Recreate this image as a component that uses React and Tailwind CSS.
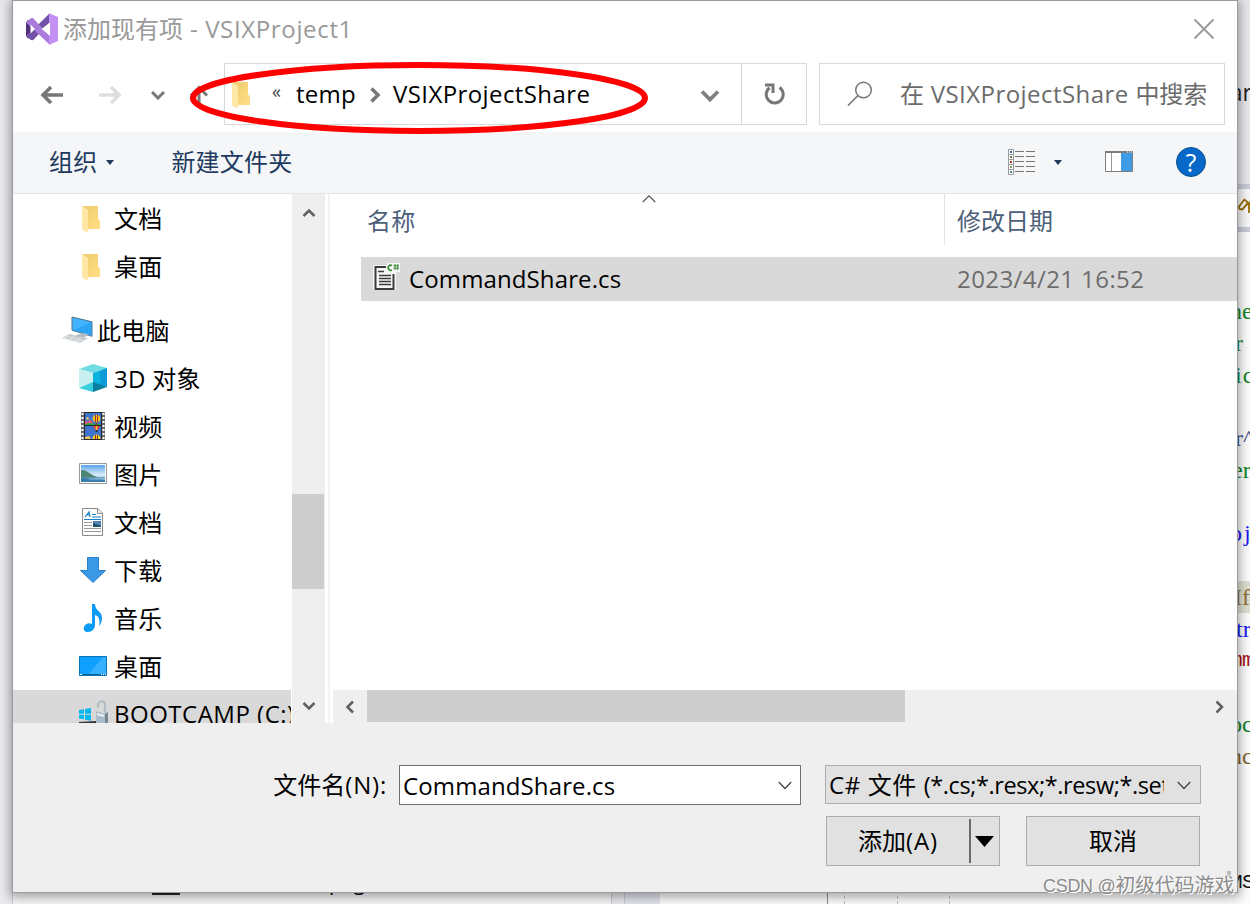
import React from "react";

const svg = { fill: "none", xmlns: "http://www.w3.org/2000/svg" };

const FolderIcon = () => (
  <svg {...svg} width="28" height="28" viewBox="0 -1 28 28" className="shrink-0">
    <defs>
      <linearGradient id="fold" x1="0" y1="0" x2="1" y2="1">
        <stop offset="0" stopColor="#efcb6c" />
        <stop offset="1" stopColor="#ffde86" />
      </linearGradient>
    </defs>
    <path d="M4 1h15v12.500l2 2V24H8z" fill="url(#fold)" />
    <path d="M3 1l6 4v21.500l-1 1-5-3z" fill="#ffe8a6" />
  </svg>
);

const VsIcon = () => (
  <svg {...svg} width="32" height="32" viewBox="0 0 32 32">
    <path d="M0 9.500L1.500 7.500 5 6v20l-3.500-1L0 22.500z" fill="#52307c" />
    <path d="M0 22.500l6-4.800L24 0v9L7 27.300 5 27z" fill="#7451a8" />
    <path d="M0 9.500L5.500 5 7 5l17 18.500V32L5 14z" fill="#a87bdc" />
    <path d="M23 0.300L32 4v24l-9 4z" fill="#c490f4" />
    <path d="M4.500 11.500v9L9 16z" fill="#fff" />
    <path d="M24 9.500v13L15.500 16z" fill="#fff" />
  </svg>
);

const PcIcon = () => (
  <svg {...svg} width="31" height="28" viewBox="0 0 31 28">
    <path d="M10 1l20 4.800v14.500L10 14.200z" fill="#42b4ff" stroke="#4a7590" />
    <path d="M12 14l17-8v13z" fill="#2ba4f8" />
    <path d="M14 19l8-2 5 2-7 3z" fill="#b4bcc2" />
    <path d="M0 22l7-4 19 4-8 5z" fill="#c2c7cb" />
    <path d="M4 20l17 4.500M2 22l17 4M7 18l-5 5M13 19l-6 5M19 21l-6 5" stroke="#eef0f1" strokeWidth=".8" />
  </svg>
);

const CubeIcon = () => (
  <svg {...svg} width="28" height="28" viewBox="0 0 28 28">
    <path d="M14 0l14 4-14 5L0 5z" fill="#73dce2" />
    <path d="M0 5l14 4v10L0 24z" fill="#c8f0f0" />
    <path d="M14 9l14-5v19l-14-4z" fill="#08b4dc" />
    <path d="M21 7l7-3v19l-7-2z" fill="#0a9bd8" />
    <path d="M0 24l14-6v10z" fill="#38cede" />
    <path d="M14 18l14 5-14 5z" fill="#087f9e" />
  </svg>
);

const VideoIcon = () => (
  <svg {...svg} width="28" height="28" viewBox="0 0 28 28">
    <path d="M2 0h24v28H2z" fill="#686868" />
    <path d="M3.500 1v27M24.500 1v27" stroke="#fff" strokeWidth="2" strokeDasharray="2 2" />
    <path d="M5.500 .5h17v13h-17zM5.500 13.500h17v14h-17z" fill="#3e74cf" stroke="#282828" />
    <path d="M6 9l3 1 2-3 3 4v2H6z" fill="#ed597a" />
    <path d="M7 6l2-1 1 2-2 1z" fill="#f4d34d" />
    <path d="M6 12l5-1 5 1h6v1H6z" fill="#28a443" />
    <circle cx="17.500" cy="6.500" r="3.800" fill="#f6c91b" />
    <path d="M16.500 3v7M18.500 3v7" stroke="#a22728" />
    <path d="M16.500 11h2v2h-2z" fill="#7c4a1d" />
    <path d="M14 14h7l-2.500 4h-2z" fill="#e53a35" />
    <path d="M17.500 14v4" stroke="#f8d22a" strokeWidth="1.500" />
    <path d="M16.700 18h1.600v2h-1.600z" fill="#222" />
    <path d="M6 25l4-1 2 3H6z" fill="#f0c95a" />
    <path d="M13.500 27c0-6 8-6 8 0z" fill="#f7d724" />
    <path d="M16.500 23v4M18.500 23v4" stroke="#992b24" />
  </svg>
);

const PictureIcon = () => (
  <svg {...svg} width="28" height="28" viewBox="0 0 28 28">
    <defs>
      <linearGradient id="sky" x1="0" y1="0" x2="0" y2="1">
        <stop offset="0" stopColor="#5ca4ec" />
        <stop offset="0.600" stopColor="#dceefa" />
        <stop offset="1" stopColor="#4283b4" />
      </linearGradient>
    </defs>
    <path d="M.5 3.500h27v20H.5z" fill="#fff" stroke="#999" />
    <path d="M2 5h24v17H2z" fill="url(#sky)" />
    <path d="M2 10c5-1 10 5 17 7.500H2z" fill="#4e8672" />
    <path d="M2 17.500h24V22H2z" fill="#3b7cab" />
    <path d="M7 19c5-1 10-1 19-1v2c-8-1-12 0-19-1z" fill="#86b9d4" />
  </svg>
);

const DocIcon = () => (
  <svg {...svg} width="28" height="28" viewBox="0 0 28 28">
    <path d="M3.500.5H19L23.500 5v22.500h-20z" fill="#fdfdfd" stroke="#8b8b8b" />
    <path d="M18.500.5v5h5" fill="#e9e9e9" stroke="#8b8b8b" />
    <path d="M6 9l4-5 1 5M7 7h4M13 6.500h4M13 9h9M5 11.500h17" stroke="#1c82c8" strokeWidth="1.200" />
    <path d="M5 14.500h8M5 17.500h8M5 20.500h17M5 23.500h17" stroke="#999" />
    <path d="M14 13h8v6h-8z" fill="#4f83b8" />
    <path d="M14 15l8 3v1h-8z" fill="#214f68" />
  </svg>
);

const DownIcon = () => (
  <svg {...svg} width="28" height="28" viewBox="0 0 28 28">
    <path d="M8.500 1.500h11v13h7L14 26.500 1.500 14.500h7z" fill="#3b98e5" stroke="#2881c9" />
  </svg>
);

const MusicIcon = () => (
  <svg {...svg} width="28" height="28" viewBox="0 0 28 28">
    <path d="M13 0h3c0 7 7 7 7 14 0 3-1 6-3 8 1-5 1-9-4-11v10c0 4-3 7-7 7-3 0-5-2-4-5s5-5 8-3z" fill="#0a9bf5" />
  </svg>
);

const DesktopIcon = () => (
  <svg {...svg} width="28" height="28" viewBox="0 0 28 28">
    <path d="M.5 4.500h27v19H.5z" fill="#10a0ff" stroke="#0873b4" />
    <path d="M10 22L24 5h3v17z" fill="#36afff" />
    <path d="M1 22.500h26" stroke="#086295" />
    <path d="M1 22.500h2M22 22.500h1M24 22.500h1M26 22.500h1" stroke="#fff" />
  </svg>
);

const DriveIcon = () => (
  <svg {...svg} width="30" height="28" viewBox="0 0 30 28" className="shrink-0">
    <path d="M0 10l5-.8v4.500H0zM6 9l6-1v5.800H6zM0 14.800h5v4.500l-5-.8zM6 14.800h6v6l-6-1z" fill="#0ab6ef" />
    <path d="M0 22l17-1v3H0z" fill="#353535" />
    <path d="M19 8V5c0-5 7-5 7 0v8" stroke="#b3bec3" strokeWidth="2.200" />
    <path d="M17 11l9 3v12l-9-3z" fill="#a9bdc8" />
    <path d="M26 14l3-2v11l-3 3z" fill="#75868f" />
    <path d="M18 14l7 2" stroke="#e9f2f6" strokeWidth="2" />
  </svg>
);

const Chevron = ({ d, w = 16, h = 16, sw = 2.5, color = "#606060" }) => (
  <svg {...svg} width={w} height={h} viewBox="0 0 16 16" className="shrink-0">
    <path d={d} stroke={color} strokeWidth={sw} />
  </svg>
);

const CsFileIcon = () => (
  <svg {...svg} width="28" height="30" viewBox="0 0 28 30">
    <path d="M1 2h13V0h13v9h-4v18H0V3z" fill="#f6f6f6" />
    <path d="M13 4H2.500v22h18V11" stroke="#3c3c3c" strokeWidth="2" />
    <path d="M5 8.500h6M6 12.500h12M6 15.500h12M6 18.500h12M6 21.500h12" stroke="#3c3c3c" strokeWidth="1.400" />
    <path d="M19 2.500c-5-2-5 6.500 0 4.500" stroke="#3a8a3a" strokeWidth="1.800" />
    <path d="M22 1v6M24.700 1v6M20.500 2.800H26M20.500 5.200H26" stroke="#3a8a3a" />
  </svg>
);

const tree = [
  [FolderIcon, "文档"],
  [FolderIcon, "桌面"],
  null,
  [CubeIcon, "3D 对象"],
  [VideoIcon, "视频"],
  [PictureIcon, "图片"],
  [DocIcon, "文档"],
  [DownIcon, "下载"],
  [MusicIcon, "音乐"],
  [DesktopIcon, "桌面"],
];

const serif = "font-['Liberation_Serif',serif] text-[24px] ";
const mono = "font-['Liberation_Mono',monospace] text-[21px] tracking-[-0.6px] pl-[2px] ";

const code = [
  ["ne", serif + "pl-[2px] text-[#12852a]"],
  ["r", serif + "pl-[7px] text-[#12852a]"],
  ["ic", serif + "pl-[7px] tracking-[1px] text-[#12852a]"],
  ["", ""],
  ["r^", serif + "pl-[7px] text-[#3c4a86]"],
  ["er", serif + "pl-[4px] text-[#12852a]"],
  ["", ""],
  ["oj", serif + "pl-[2px] tracking-[2px] text-[#1a1af0]"],
  ["", ""],
  ["If", serif + "bg-[#dddfcf] pl-[6px] text-[#91703c]"],
  ["tr", serif + "pl-[8px] text-[#1a1af0]"],
  ["mm", mono + "text-[#a31515]"],
  ["", ""],
  ["oc", serif + "pl-[2px] text-[#12852a]"],
  ["nc", serif + "pl-[2px] text-[#80642d]"],
  ["", ""],
  ["", ""],
  ["", ""],
  ["MS", mono + "text-[#111]"],
];

function Editor() {
  return (
    <div className="flex h-full w-full bg-[#e9e9ee]">
      <div className="w-3 shrink-0" />
      <div className="flex grow flex-col justify-end">
        <div className="flex h-[40px] items-stretch">
          <div className="flex w-[600px] items-start border-x border-[#c8c9d8] bg-[#f6f6f8] pl-[139px] text-[22px] text-black">
            <span className="mt-[9px] h-[22px] w-[28px] shrink-0 border-2 border-[#222]" />
            <span className="-mt-px pl-[149px] text-[21px] leading-[38px]">page</span>
          </div>
          <div className="w-[12px]" />
          <div className="w-[36px] border-l border-[#c8c9d8] bg-[#e2e3ec]" />
          <div className="flex grow items-start bg-[#fbfbfb] font-['Liberation_Mono'] text-[20px] leading-[47px] text-[#777]">
            <span className="w-[167px] pl-[66px]">100</span>
            <span className="h-full w-[17px] border-l border-[#888]" />
            <span className="h-full w-[53px] border-l border-dashed border-[#bbb]" />
            <span className="h-full w-[52px] border-l border-dashed border-[#bbb]" />
            <span className="h-full w-[96px] border-l border-dashed border-[#bbb]" />
            <span className="text-[#2b91af]">CommandID</span>
          </div>
        </div>
      </div>
      <div className="flex w-[22px] shrink-0 flex-col overflow-hidden bg-[#fcfcfc]">
        <div className="flex h-[184px] items-center justify-end bg-[#e7e7ec] font-['Open_Sans',sans-serif] text-[23px] text-[#222]">
          <span className="-mr-[2px]">ar</span>
        </div>
        <div className="flex h-[48px] items-center justify-end border-y-[5px] border-[#cacbda] bg-[#f7f7f8]">
          <svg {...svg} width="14" height="26" viewBox="0 0 14 26">
            <path d="M3 11.500l5.500-7 3.500 3-5.500 7-3-.5zM8 12l5-4v10" stroke="#9a6c00" strokeWidth="1.800" />
          </svg>
        </div>
        <div className="h-[63px] shrink-0" />
        {code.map(([t, c], i) => (
          <div key={i} className={"flex h-[31.8px] shrink-0 items-center " + c}>
            {t}
          </div>
        ))}
      </div>
    </div>
  );
}

export default function App() {
  return (
    <div className="relative h-[904px] w-[1250px] overflow-hidden font-['Open_Sans','Noto_Sans_CJK_SC',sans-serif] text-[24px] text-black">
      <Editor />

      <div className="absolute left-[12px] top-0 flex h-[893px] w-[1226px] flex-col border border-[#9a9a9c] bg-[#efefef] shadow-[0_2px_10px_2px_rgba(0,0,0,0.35)]">
        <div className="flex h-[56px] shrink-0 items-center bg-white pl-[13px] pr-[22px]">
          <VsIcon />
          <span className="ml-[5px] whitespace-pre text-[#999]">添加现有项<span className="tracking-[0.65px]"> - VSIXProject1</span></span>
          <svg {...svg} width="22" height="22" viewBox="0 0 22 22" className="ml-auto">
            <path d="M1.500 1.500l19 19M20.500 1.500l-19 19" stroke="#999" strokeWidth="1.800" />
          </svg>
        </div>

        <div className="flex h-[75px] shrink-0 items-start bg-white pt-[6px]">
          <div className="flex h-[62px] w-[211px] items-center pl-[27px] pt-px">
            <svg {...svg} width="24" height="20" viewBox="0 0 24 20">
              <path d="M23 10H3M11 2l-8 8 8 8" stroke="#777" strokeWidth="3.500" />
            </svg>
            <svg {...svg} width="24" height="20" viewBox="0 0 24 20" className="ml-[35px]">
              <path d="M0 10h20M12 2l8 8-8 8" stroke="#dedede" strokeWidth="3.500" />
            </svg>
            <svg {...svg} width="14" height="10" viewBox="0 0 14 10" className="ml-[28px]">
              <path d="M1 2l6 6 6-6" stroke="#777" strokeWidth="3" />
            </svg>
            <svg {...svg} width="22" height="20" viewBox="0 0 22 20" className="ml-[23px]">
              <path d="M11 18V3M3 10.500l8-8 8 8" stroke="#777" strokeWidth="3" />
            </svg>
          </div>
          <div className="flex h-[62px] w-[583px] items-center border border-[#d9d9d9]">
            <div className="ml-[4px]"><FolderIcon /></div>
            <span className="ml-[15px] -mt-[6px] text-[18px] text-[#444]">«</span>
            <span className="ml-[15px] text-[24px] tracking-[0.3px]">temp</span>
            <svg {...svg} width="11" height="16" viewBox="0 0 11 16" className="ml-[14px] mt-[2px]">
              <path d="M1.500 1.500L8 8l-6.500 6.500" stroke="#777" strokeWidth="3.500" />
            </svg>
            <span className="ml-[12px] tracking-[0.4px]">VSIXProjectShare</span>
            <svg {...svg} width="20" height="14" viewBox="0 0 20 14" className="ml-auto mr-[21px] mt-[3px]">
              <path d="M2 2.500l8 8 8-8" stroke="#808080" strokeWidth="3.800" />
            </svg>
            <div className="flex h-full w-[65px] items-center justify-center border-l border-[#d9d9d9]">
              <svg {...svg} width="22" height="24" viewBox="0 0 22 24">
                <path d="M16.500 5.500a8.500 8.500 0 1 1-10 .3" stroke="#777" strokeWidth="3" />
                <path d="M2 3h8v8" stroke="#777" strokeWidth="3" />
              </svg>
            </div>
          </div>
          <div className="ml-[12px] flex h-[62px] w-[406px] items-center border border-[#d9d9d9] text-[#6b6b6b]">
            <svg {...svg} width="26" height="26" viewBox="0 0 26 26" className="ml-[27px]">
              <circle cx="16.500" cy="9" r="7.800" stroke="#777" strokeWidth="1.500" />
              <path d="M11 14.500L1 24.500" stroke="#777" strokeWidth="1.700" />
            </svg>
            <span className="ml-[27px] whitespace-pre">在<span className="tracking-[0.45px]"> VSIXProjectShare </span>中搜索</span>
          </div>
        </div>

        <div className="flex h-[62px] shrink-0 items-center border-b border-[#e5e5e5] bg-[#f4f6f8] pb-px pl-[36px] text-[#1e3a60]">
          <span className="tracking-[0.2px]">组织</span>
          <svg {...svg} width="8" height="5" viewBox="0 0 8 5" className="ml-[9px]"><path d="M0 0h8L4 5z" fill="#1e395b" /></svg>
          <span className="ml-[57px] tracking-[0.2px]">新建文件夹</span>
          <div className="ml-auto flex items-center pr-[31px]">
            <svg {...svg} width="28" height="26" viewBox="0 0 28 26">
              {[0, 5, 10, 15, 20].map((y, i) => (
                <g key={y}>
                  <path d={`M.5 ${y + 0.5}h5v5h-5z`} fill="#fff" stroke="#999" />
                  <path d={`M2 ${y + 2}h2v2H2z`} fill={["#326ba0", "#647c42", "#bd291d", "#8ba263", "#3c8490"][i]} />
                  <path d={`M7 ${y + 2.5}h9M18 ${y + 2.5}h9`} stroke="#777" />
                </g>
              ))}
            </svg>
            <svg {...svg} width="8" height="5" viewBox="0 0 8 5" className="ml-[18px]"><path d="M0 0h8L4 5z" fill="#1e395b" /></svg>
            <svg {...svg} width="28" height="22" viewBox="0 0 28 22" className="ml-[43px]">
              <path d="M.5.500h27v20H.5z" fill="#fff" stroke="#7d7d7d" />
              <path d="M0 1h28" stroke="#7d7d7d" strokeWidth="2" />
              <path d="M6.500 2v18" stroke="#999" />
              <path d="M16 2h11v18H16z" fill="#409be5" />
              <path d="M22 1h1M24 1h1M26 1h1" stroke="#fff" />
            </svg>
            <div className="ml-[43px] flex size-[30px] items-center justify-center rounded-full border border-[#0b4d8d] bg-[#0669c9] text-[25px] font-medium leading-none text-white">?</div>
          </div>
        </div>

        <div className="flex h-[529px] shrink-0 bg-white">
          <div className="flex w-[278px] flex-col overflow-hidden">
            {tree.map((item, i) =>
              item ? (
                <div key={i} className="flex h-[48px] shrink-0 items-center gap-[7px] pl-[66px]">
                  {React.createElement(item[0])}
                  <span className="whitespace-pre pt-px tracking-[0.3px]">{item[1]}</span>
                </div>
              ) : (
                <div key={i} className="mt-[16px] flex h-[48px] shrink-0 items-center gap-[4px] pl-[49px]">
                  <PcIcon />
                  <span className="pt-px tracking-[0.2px]">此电脑</span>
                </div>
              )
            )}
            <div className="flex h-[48px] shrink-0 items-center gap-[5px] bg-[#d9d9d9] pl-[66px]">
              <DriveIcon />
              <span className="whitespace-nowrap tracking-[0.5px]">BOOTCAMP (C:)</span>
            </div>
          </div>
          <div className="ml-px flex w-[33px] flex-col items-center bg-[#efefef]">
            <div className="flex h-[38px] items-center"><Chevron d="M2.500 11L8 5.500l5.500 5.500" /></div>
            <div className="mt-[262px] mr-px h-[95px] w-[32px] bg-[#cdcdcd]" />
            <div className="mt-auto flex h-[34px] items-center"><Chevron d="M2.500 5l5.500 5.500L13.500 5" /></div>
          </div>
          <div className="ml-[3px] w-[2px] bg-[#f4f4f4]" />
          <div className="ml-[3px] flex grow flex-col">
            <div className="relative flex h-[51px] text-[#4c607a]">
              <span className="flex w-[612px] items-center border-r border-[#e2e2e2] pl-[34px] pt-[2px] tracking-[0.2px]">名称</span>
              <span className="flex items-center pl-[12px] pt-[2px]">修改日期</span>
              <svg {...svg} width="14" height="8" viewBox="0 0 14 8" className="absolute left-[309px] top-px">
                <path d="M.8 7L7 .8 13.200 7" stroke="#555" strokeWidth="1.200" />
              </svg>
            </div>
            <div className="ml-[28px] mt-[12px] flex h-[44px] items-center bg-[#d9d9d9] pl-[12px]">
              <div className="-mt-[2px]"><CsFileIcon /></div>
              <span className="ml-[8px] w-[548px] tracking-[0.12px]">CommandShare.cs</span>
              <span className="tracking-[0.42px] text-[#6d6d6d]">2023/4/21 16:52</span>
            </div>
            <div className="mt-auto flex h-[33px] items-center bg-[#efefef] pl-[9px] pr-[10px]">
              <Chevron d="M11 2.500L5.500 8l5.500 5.500" />
              <div className="ml-[9px] mb-px h-[32px] w-[538px] bg-[#cdcdcd]" />
              <div className="ml-auto"><Chevron d="M5.500 2.500L11 8l-5.500 5.500" /></div>
            </div>
          </div>
        </div>

        <div className="flex grow flex-col items-end pr-[36px] pt-[42px]">
          <div className="flex items-start">
            <span className="mr-[12px] whitespace-nowrap leading-[40px]">文件名<span className="tracking-[0.8px]">(N):</span></span>
            <div className="flex h-[40px] w-[402px] items-center border border-[#707070] bg-white pl-[3px] pr-[8px]">
              <span className="pt-px tracking-[0.12px]">CommandShare.cs</span>
              <svg {...svg} width="14" height="9" viewBox="0 0 14 9" className="ml-auto"><path d="M.8 1L7 7.500 13.200 1" stroke="#444" strokeWidth="1.300" /></svg>
            </div>
            <div className="ml-[24px] flex h-[39px] w-[376px] items-center border border-[#acacac] bg-[#e1e1e1] pl-[3px] pr-[9px]">
              <span className="w-[335px] overflow-hidden whitespace-nowrap pt-px"><span className="tracking-[0.6px]">C# 文件 </span><span className="text-[23.5px] tracking-[-0.4px]">(*.cs;*.resx;*.resw;*.settings)</span></span>
              <svg {...svg} width="14" height="9" viewBox="0 0 14 9" className="ml-auto mt-[2px]"><path d="M.8 1L7 7.500 13.200 1" stroke="#444" strokeWidth="1.300" /></svg>
            </div>
          </div>
          <div className="mt-[11px] mr-px flex gap-[26px]">
            <div className="flex h-[50px] w-[174px] items-center border border-[#acacac] bg-[#e1e1e1]">
              <span className="w-[142px] text-center">添加<span className="tracking-[0.9px]">(A)</span></span>
              <div className="flex h-[44px] grow items-center justify-center border-l-2 border-[#696969] pr-px">
                <svg {...svg} width="19" height="11" viewBox="0 0 19 11"><path d="M0 0h19L9.500 11z" fill="#000" /></svg>
              </div>
            </div>
            <div className="flex h-[50px] w-[174px] items-center justify-center border border-[#acacac] bg-[#e1e1e1]">取消</div>
          </div>
        </div>
      </div>

      <svg {...svg} width="464" height="78" viewBox="0 0 464 78" className="absolute left-[187px] top-[59px]">
        <ellipse cx="232" cy="39" rx="226" ry="33" stroke="#f00" strokeWidth="6" />
      </svg>

      <div className="absolute left-[1227px] top-[871px] size-[4px] bg-[#bbb]" />
      <div className="absolute left-[1043px] top-[874px] whitespace-nowrap font-['Liberation_Sans','Noto_Sans_CJK_SC',sans-serif] text-[19.800px] leading-[22px] text-[#8c8c8c] [text-shadow:1px_1px_0_#fff]">
        <span className="text-[18px] tracking-[-0.3px]">CSDN @</span>初级代码游戏
      </div>
    </div>
  );
}
